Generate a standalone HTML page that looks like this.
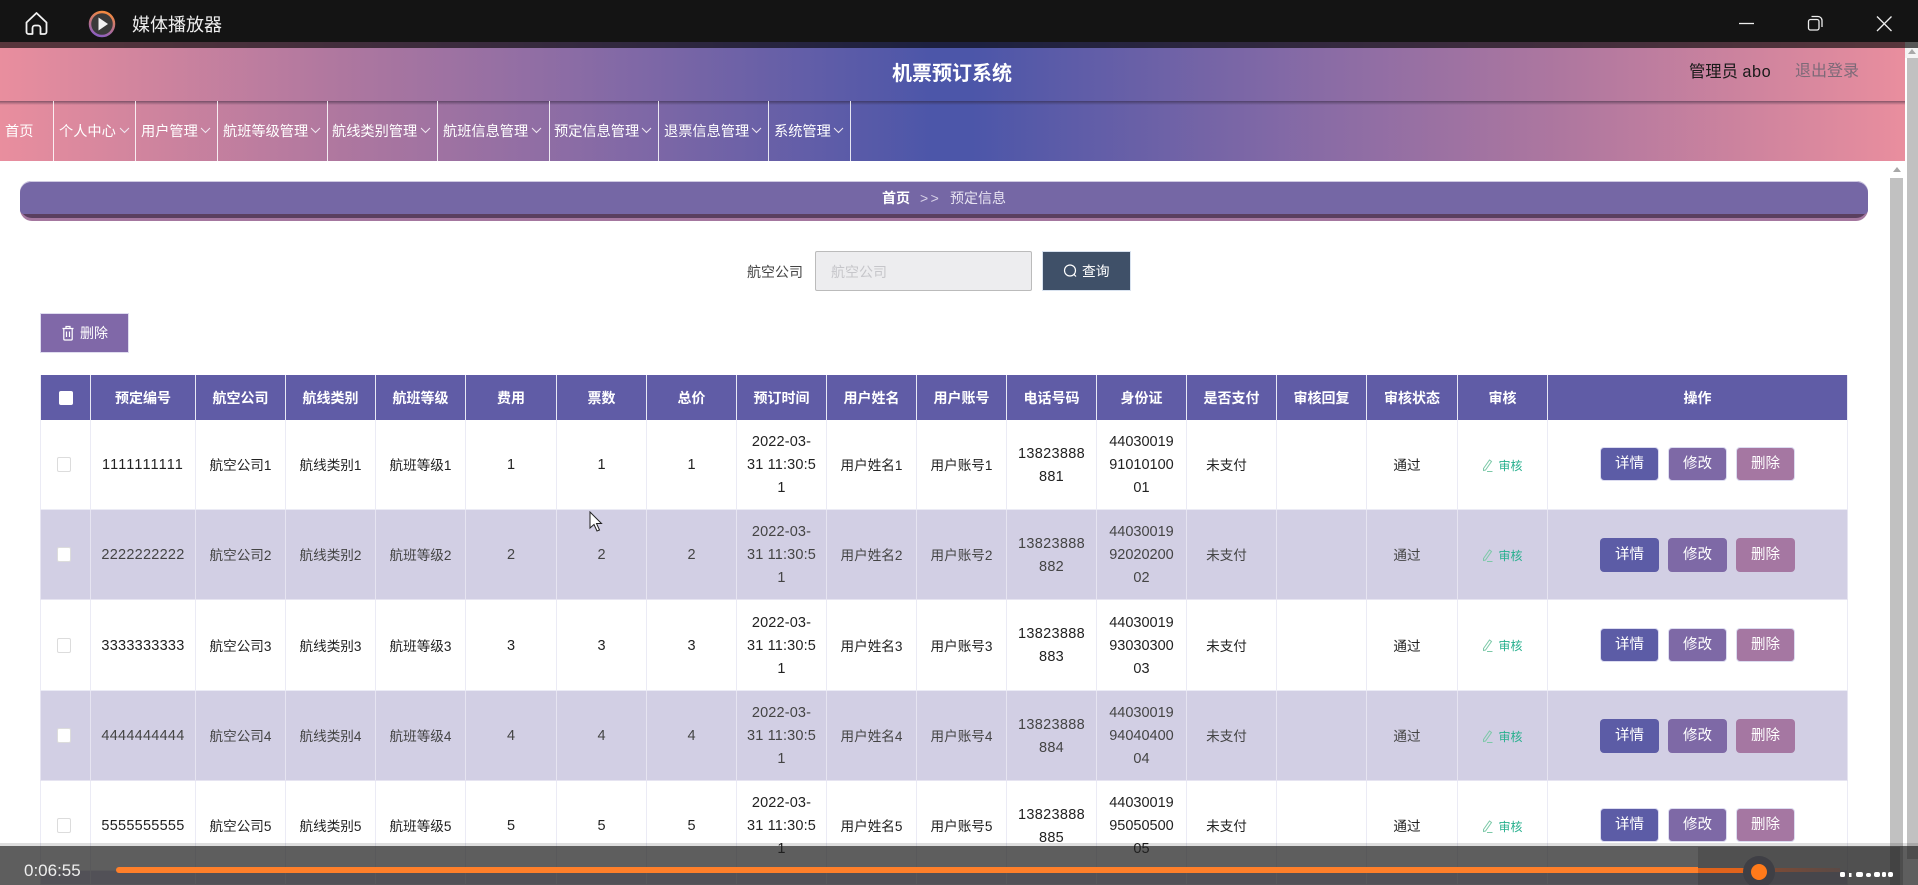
<!DOCTYPE html>
<html lang="zh-CN"><head><meta charset="utf-8"><title>机票预订系统</title>
<style>
*{box-sizing:border-box}
html,body{margin:0;padding:0;width:1918px;height:885px;overflow:hidden;background:#fff;font-family:"Liberation Sans","Noto Sans CJK SC",sans-serif}
#root{position:relative;width:1918px;height:885px;overflow:hidden;background:#fff}
.a{position:absolute}
#hdr{left:0;top:42px;width:1905px;height:119px;background:linear-gradient(90deg,#e98e9e 0,#ae779f 18%,#8b6ca5 30%,#4c56a9 49%,#4c56a9 51%,#8b6ca5 70%,#ae779f 82%,#e98e9e 100%)}
.sep{position:absolute;top:101px;width:1px;height:60px;background:rgba(255,255,255,.85)}
.nav{position:absolute;top:121px;height:22px;line-height:22px;font-size:14.2px;color:#fff;white-space:nowrap}
table{position:absolute;left:40px;top:375px;width:1808px;border-collapse:separate;border-spacing:0;table-layout:fixed;font-size:13.6px;color:#222}
th{height:45px;background:#605ca6;color:#fff;font-weight:700;text-align:center;border-right:1px solid #e8e8f4;padding:0;font-size:14px}
td{text-align:center;border-right:1px solid #ebebf5;border-bottom:1px solid #ebebf5;padding:2px 0 0;line-height:23px;background:#fff;position:relative}
tr.e td{background:#d2cfe4;color:#444;border-color:#e6e4f1}
th:first-child,td:first-child{border-left:1px solid #ebebf5}
td.n{font-size:14.5px}
td.c{font-size:14.5px;letter-spacing:.25px}
td.c1{font-size:14.5px;letter-spacing:1.1px}
td.p{font-size:14.5px;letter-spacing:.3px}
td.t{font-size:14.5px;letter-spacing:.15px}
td.o{padding-right:10px}
.cb{display:block;position:relative;top:-1px;width:14px;height:15px;border:1px solid #dcdcdc;border-radius:2px;background:#fff;margin:0 0 0 16px}
.hcb{display:block;width:14px;height:14px;background:#fff;border-radius:2px;margin:0 0 0 18px}
.chk{color:#27b08e;font-size:12px;white-space:nowrap}
.chk svg{vertical-align:-2px;margin-right:5px}
.btn{display:inline-block;position:relative;top:-1px;width:59px;height:34px;line-height:33px;color:#fff;font-size:14.5px;border-radius:4px;border:1px solid #dcdcf0;margin:0 4.5px;text-align:center;vertical-align:middle}
tr.f .btn{top:-2px}
tr.e .btn{border-color:transparent}
.b1{background:#5c5ca6}.b2{background:#7e69a6}.b3{background:#a577a2}
</style></head><body>
<div id="root">

<div class="a" id="hdr"></div>
<div class="a" style="left:0;top:101px;width:1905px;height:4px;background:linear-gradient(180deg,rgba(40,30,50,.5),rgba(40,30,50,0))"></div>
<div class="a" style="left:0;top:0;width:1918px;height:42px;background:#141414"></div>
<div class="a" style="left:0;top:42px;width:1905px;height:6px;background:rgba(0,0,0,.62)"></div>
<div class="a" style="left:1905px;top:42px;width:13px;height:6px;background:#565656"></div>

<!-- title bar -->
<svg class="a" style="left:24px;top:11px" width="26" height="25" viewBox="0 0 26 25" fill="none" stroke="#f2f2f2" stroke-width="1.800" stroke-linejoin="round"><path d="M2.500 11.500 12.500 2l10 9.500V21a2 2 0 0 1-2 2H16.500v-6a2.500 2.500 0 0 0-2.500-2.500h-3A2.500 2.500 0 0 0 8.500 17v6H4.500a2 2 0 0 1-2-2z"/></svg>
<svg class="a" style="left:88px;top:10px" width="28" height="28" viewBox="0 0 28 28"><defs><linearGradient id="pg" x1="0.7" y1="0" x2="0.4" y2="1"><stop offset="0" stop-color="#f58a3c"/><stop offset="1" stop-color="#8d5fc0"/></linearGradient></defs><circle cx="14" cy="14" r="12" fill="#3a3a3a" stroke="url(#pg)" stroke-width="2.500"/><path d="M10.500 7.500 20 14l-9.500 6.500z" fill="#f2f2f2"/></svg>
<div class="a" style="left:132px;top:13px;font-size:18px;line-height:24px;color:#eee;white-space:nowrap">媒体播放器</div>
<svg class="a" style="left:1730px;top:10px" width="180" height="28" viewBox="0 0 180 28" fill="none" stroke="#eee" stroke-width="1.300"><path d="M9 13.500h15"/><rect x="78.500" y="9.500" width="10.500" height="10.500" rx="2"/><path d="M81.500 6.500h6.500a4 4 0 0 1 4 4v6.500"/><path d="M147 6.500l14.500 14.500M161.500 6.500 147 21"/></svg>

<!-- header -->
<div class="a" style="left:852px;top:59px;width:200px;text-align:center;font-size:20px;line-height:30px;font-weight:700;color:#fff">机票预订系统</div>
<div class="a" style="left:1689px;top:60px;font-size:16.300px;line-height:24px;color:#1a1a1a;white-space:nowrap">管理员 <span style="letter-spacing:.6px">abo</span></div>
<div class="a" style="left:1795px;top:60px;font-size:16px;line-height:24px;color:#7d6a78;white-space:nowrap">退出登录</div>

<!-- nav -->
<div class="nav" style="left:5px">首页</div><div class="sep" style="left:53px"></div>
<div class="nav" style="left:59px">个人中心</div><div class="sep" style="left:135px"></div>
<div class="nav" style="left:141px">用户管理</div><div class="sep" style="left:217px"></div>
<div class="nav" style="left:223px">航班等级管理</div><div class="sep" style="left:327px"></div>
<div class="nav" style="left:332px">航线类别管理</div><div class="sep" style="left:437px"></div>
<div class="nav" style="left:443px">航班信息管理</div><div class="sep" style="left:549px"></div>
<div class="nav" style="left:554px">预定信息管理</div><div class="sep" style="left:658px"></div>
<div class="nav" style="left:664px">退票信息管理</div><div class="sep" style="left:768px"></div>
<div class="nav" style="left:774px">系统管理</div><div class="sep" style="left:850px"></div>
<svg class="a" style="left:0;top:126px" width="860" height="10" fill="none" stroke="#f0e8f2" stroke-width="1"><path d="M120 2l4.500 4.500L129 2M201 2l4.500 4.500L210 2M311 2l4.500 4.500L320 2M421 2l4.500 4.500L430 2M532 2l4.500 4.500L541 2M642 2l4.500 4.500L651 2M752 2l4.500 4.500L761 2M834 2l4.500 4.500L843 2"/></svg>

<!-- breadcrumb -->
<div class="a" style="left:20px;top:181px;width:1848px;height:40px;border-radius:12px;background:#a4779f"></div>
<div class="a" style="left:20px;top:181px;width:1848px;height:37px;border-radius:12px;background:#5a3f5f"></div>
<div class="a" style="left:20px;top:181px;width:1848px;height:33px;border-radius:11px 11px 4px 4px;background:#7567a5;box-shadow:inset 0 1px 0 #cfc9e2"></div>
<div class="a" style="left:882px;top:187px;font-size:14px;line-height:22px;font-weight:700;color:#fff;white-space:nowrap">首页</div>
<div class="a" style="left:920px;top:187px;font-size:14px;line-height:22px;letter-spacing:2.500px;color:#d8d2e8;white-space:nowrap">&gt;&gt;</div>
<div class="a" style="left:950px;top:187px;font-size:14px;line-height:22px;color:#e8e4f2;white-space:nowrap">预定信息</div>

<!-- search -->
<div class="a" style="left:747px;top:261px;font-size:14px;line-height:22px;color:#444;white-space:nowrap">航空公司</div>
<div class="a" style="left:815px;top:251px;width:217px;height:40px;background:#ededef;border:1px solid #bbb;border-radius:2px"></div>
<div class="a" style="left:831px;top:261px;font-size:14px;line-height:22px;color:#c6c6ca;white-space:nowrap">航空公司</div>
<div class="a" style="left:1042px;top:251px;width:89px;height:40px;background:#3f5068;border:1px solid #d8e2ef"></div>
<svg class="a" style="left:1063px;top:263px" width="15" height="16" fill="none" stroke="#fff" stroke-width="1.200"><circle cx="7" cy="7.500" r="5.500"/><path d="M11 11.500l2 2"/></svg>
<div class="a" style="left:1082px;top:261px;font-size:13.800px;line-height:22px;color:#fff;white-space:nowrap">查询</div>

<!-- delete -->
<div class="a" style="left:40px;top:313px;width:89px;height:40px;background:#8068a8;border:1px solid #dfdcef"></div>
<svg class="a" style="left:61px;top:325px" width="14" height="16" fill="none" stroke="#fff" stroke-width="1.200"><path d="M1.500 3.500h11M5 3.500V1.500h4v2M2.800 3.500v10.500a1 1 0 0 0 1 1h6.400a1 1 0 0 0 1-1V3.500M5.500 6.500v5.500M8.500 6.500v5.500"/></svg>
<div class="a" style="left:80px;top:322px;font-size:14px;line-height:22px;color:#fff;white-space:nowrap">删除</div>

<!-- table -->
<table>
<colgroup><col style="width:51px"><col style="width:105px"><col style="width:90px"><col style="width:90px"><col style="width:90px"><col style="width:91px"><col style="width:90px"><col style="width:90px"><col style="width:90px"><col style="width:90px"><col style="width:90px"><col style="width:90px"><col style="width:90px"><col style="width:90px"><col style="width:90px"><col style="width:91px"><col style="width:90px"><col style="width:300px"></colgroup>
<tr><th><span class="hcb"></span></th><th>预定编号</th><th>航空公司</th><th>航线类别</th><th>航班等级</th><th>费用</th><th>票数</th><th>总价</th><th>预订时间</th><th>用户姓名</th><th>用户账号</th><th>电话号码</th><th>身份证</th><th>是否支付</th><th>审核回复</th><th>审核状态</th><th>审核</th><th>操作</th></tr>

<tr class="f" style="height:90px"><td><span class="cb"></span></td><td class="c1">1111111111</td><td>航空公司1</td><td>航线类别1</td><td>航班等级1</td><td class="n">1</td><td class="n">1</td><td class="n">1</td><td class="t">2022-03-<br>31 11:30:5<br>1</td><td>用户姓名1</td><td>用户账号1</td><td class="p">13823888<br>881</td><td class="n">44030019<br>91010100<br>01</td><td class="o">未支付</td><td></td><td class="o">通过</td><td><span class="chk"><svg width="11" height="13" fill="none" stroke="#7cc9a8" stroke-width="1"><path d="M7.500 1 9.500 2.500 3.500 11 1.500 11.500 1.500 9.500zM5 12.500h5.500"/></svg>审核</span></td><td><span class="btn b1">详情</span><span class="btn b2">修改</span><span class="btn b3">删除</span></td></tr>

<tr class="e" style="height:90px"><td><span class="cb"></span></td><td class="c">2222222222</td><td>航空公司2</td><td>航线类别2</td><td>航班等级2</td><td class="n">2</td><td class="n">2</td><td class="n">2</td><td class="t">2022-03-<br>31 11:30:5<br>1</td><td>用户姓名2</td><td>用户账号2</td><td class="p">13823888<br>882</td><td class="n">44030019<br>92020200<br>02</td><td class="o">未支付</td><td></td><td class="o">通过</td><td><span class="chk"><svg width="11" height="13" fill="none" stroke="#7cc9a8" stroke-width="1"><path d="M7.500 1 9.500 2.500 3.500 11 1.500 11.500 1.500 9.500zM5 12.500h5.500"/></svg>审核</span></td><td><span class="btn b1">详情</span><span class="btn b2">修改</span><span class="btn b3">删除</span></td></tr>

<tr style="height:91px"><td><span class="cb"></span></td><td class="c">3333333333</td><td>航空公司3</td><td>航线类别3</td><td>航班等级3</td><td class="n">3</td><td class="n">3</td><td class="n">3</td><td class="t">2022-03-<br>31 11:30:5<br>1</td><td>用户姓名3</td><td>用户账号3</td><td class="p">13823888<br>883</td><td class="n">44030019<br>93030300<br>03</td><td class="o">未支付</td><td></td><td class="o">通过</td><td><span class="chk"><svg width="11" height="13" fill="none" stroke="#7cc9a8" stroke-width="1"><path d="M7.500 1 9.500 2.500 3.500 11 1.500 11.500 1.500 9.500zM5 12.500h5.500"/></svg>审核</span></td><td><span class="btn b1">详情</span><span class="btn b2">修改</span><span class="btn b3">删除</span></td></tr>

<tr class="e" style="height:90px"><td><span class="cb"></span></td><td class="c">4444444444</td><td>航空公司4</td><td>航线类别4</td><td>航班等级4</td><td class="n">4</td><td class="n">4</td><td class="n">4</td><td class="t">2022-03-<br>31 11:30:5<br>1</td><td>用户姓名4</td><td>用户账号4</td><td class="p">13823888<br>884</td><td class="n">44030019<br>94040400<br>04</td><td class="o">未支付</td><td></td><td class="o">通过</td><td><span class="chk"><svg width="11" height="13" fill="none" stroke="#7cc9a8" stroke-width="1"><path d="M7.500 1 9.500 2.500 3.500 11 1.500 11.500 1.500 9.500zM5 12.500h5.500"/></svg>审核</span></td><td><span class="btn b1">详情</span><span class="btn b2">修改</span><span class="btn b3">删除</span></td></tr>

<tr class="f" style="height:90px"><td><span class="cb"></span></td><td class="c">5555555555</td><td>航空公司5</td><td>航线类别5</td><td>航班等级5</td><td class="n">5</td><td class="n">5</td><td class="n">5</td><td class="t">2022-03-<br>31 11:30:5<br>1</td><td>用户姓名5</td><td>用户账号5</td><td class="p">13823888<br>885</td><td class="n">44030019<br>95050500<br>05</td><td class="o">未支付</td><td></td><td class="o">通过</td><td><span class="chk"><svg width="11" height="13" fill="none" stroke="#7cc9a8" stroke-width="1"><path d="M7.500 1 9.500 2.500 3.500 11 1.500 11.500 1.500 9.500zM5 12.500h5.500"/></svg>审核</span></td><td><span class="btn b1">详情</span><span class="btn b2">修改</span><span class="btn b3">删除</span></td></tr>

<tr class="e" style="height:14px;line-height:10px"><td style="padding:0;line-height:10px"></td><td></td><td></td><td></td><td></td><td></td><td></td><td></td><td></td><td></td><td></td><td></td><td></td><td></td><td></td><td></td><td></td><td></td></tr>
</table>

<!-- cursor -->
<svg class="a" style="left:589px;top:511px" width="15" height="22" viewBox="0 0 15 22"><path d="M1 1v16l4-3.500 3 6.500 2.500-1-3-6.500H12.500z" fill="#fff" stroke="#222" stroke-width="1"/></svg>

<!-- scrollbars -->
<div class="a" style="left:1890px;top:161px;width:13px;height:17px;background:#fff"></div>
<div class="a" style="left:1893px;top:167px;width:0;height:0;border-left:4px solid transparent;border-right:4px solid transparent;border-bottom:5px solid #a8a8a8"></div>
<div class="a" style="left:1890px;top:178px;width:13px;height:707px;background:#c1c1c1"></div>
<div class="a" style="left:1905px;top:48px;width:13px;height:10px;background:#f4f4f4"></div>
<div class="a" style="left:1908px;top:49px;width:0;height:0;border-left:4px solid transparent;border-right:4px solid transparent;border-bottom:5px solid #a8a8a8"></div>
<div class="a" style="left:1907px;top:58px;width:11px;height:801px;background:#c1c1c1"></div>

<!-- player overlay -->
<div class="a" style="left:0;top:843px;width:1918px;height:3px;background:rgba(0,0,0,.13)"></div>
<div class="a" style="left:0;top:846px;width:1918px;height:39px;background:rgba(32,32,32,.72)"></div>
<div class="a" style="left:1698px;top:847px;width:202px;height:38px;background:rgba(40,40,40,.25)"></div>
<div class="a" style="left:24px;top:859px;font-size:17px;line-height:24px;color:#eee;white-space:nowrap">0:06:55</div>
<div class="a" style="left:116px;top:867px;width:1582px;height:6px;background:#ff7f2a;border-radius:3px 0 0 3px"></div>
<div class="a" style="left:1698px;top:868px;width:46px;height:5px;background:#e0631c"></div>
<div class="a" style="left:1775px;top:868px;width:65px;height:4px;background:linear-gradient(90deg,#7a4a36,#5a4a46)"></div>
<svg class="a" style="left:1743px;top:856px" width="32" height="29"><circle cx="16" cy="16" r="16" fill="#3f3f45"/><circle cx="16" cy="16" r="8" fill="#ff7a1a"/></svg>
<svg class="a" style="left:1838px;top:870px" width="58" height="9" fill="#fff"><rect x="2" y="2" width="5" height="5" rx="1.500"/><rect x="11" y="3" width="2.500" height="4"/><rect x="18" y="2" width="7" height="5" rx="2"/><rect x="28" y="3" width="5" height="4" rx="2"/><rect x="36" y="2" width="6" height="5" rx="2"/><rect x="44" y="2" width="4" height="5" rx="1.500"/><rect x="50" y="2" width="5" height="5" rx="2"/></svg>

</div>
</body></html>
